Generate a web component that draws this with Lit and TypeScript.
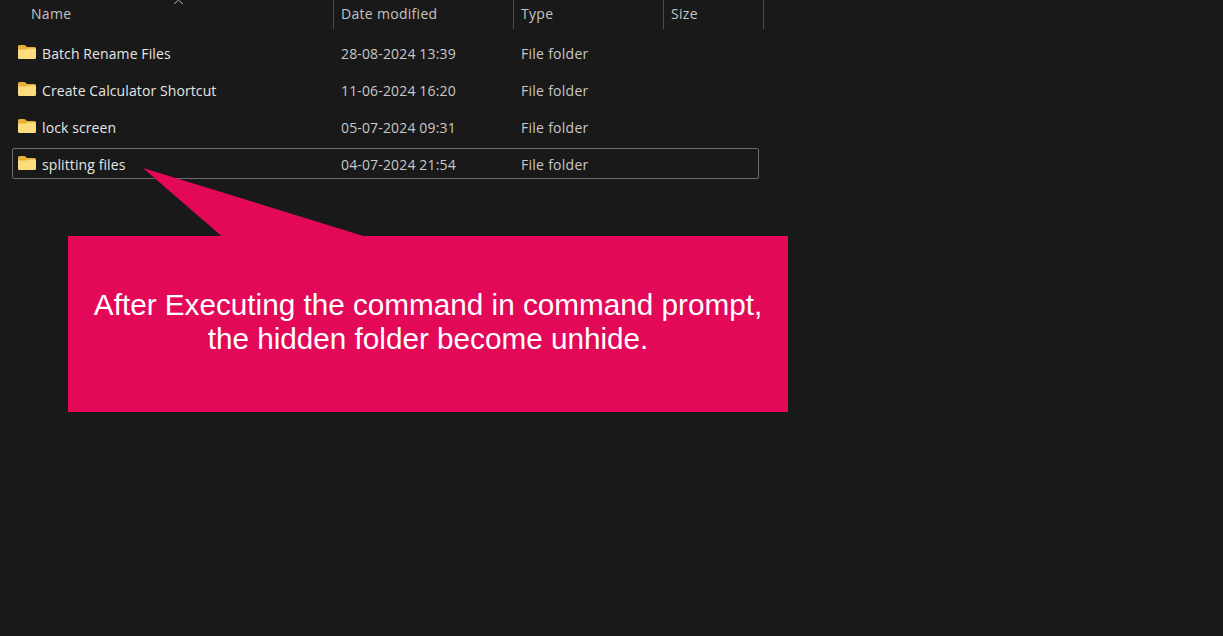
import { LitElement, html, css, svg } from "lit";
import { customElement } from "lit/decorators.js";

const rows = [
  ["Batch Rename Files", "28-08-2024 13:39"],
  ["Create Calculator Shortcut", "11-06-2024 16:20"],
  ["lock screen", "05-07-2024 09:31"],
  ["splitting files", "04-07-2024 21:54"],
];

const folder = svg`<svg class="ico" width="20" height="16" viewBox="0 0 20 16">
  <path d="M1 2.5 Q1 1 2.5 1 H7 Q8 1 9 2 L10 3 H17.5 Q19 3 19 4.5 V6 H1 Z" fill="#e8b038"/>
  <path d="M1 5.4 H9.5 L10.5 4.4 H17.6 Q19 4.4 19 5.8 V13.8 Q19 15 17.6 15 H2.4 Q1 15 1 13.8 Z" fill="#fddc7e"/>
</svg>`;

@customElement("app-root")
export class AppRoot extends LitElement {
  static styles = css`
    :host { display: block; width: 1223px; height: 636px; background: #191919; position: relative; overflow: hidden; font-family: "Open Sans", "Noto Sans", sans-serif; color: #dcdcdc; font-size: 14px; }
    .list { width: 764px; display: flex; flex-direction: column; }
    .head { display: grid; grid-template-columns: 334px 180px 150px 100px; height: 29px; }
    .hc { border-right: 1px solid #4a4a4a; padding: 4px 0 0 7px; color: #c4c4c4; line-height: 20px; letter-spacing: 0.3px; }
    .hc:first-child { padding-left: 31px; }
    .body { display: flex; flex-direction: column; padding-top: 8px; }
    .row { display: grid; grid-template-columns: 322px 180px 150px; width: 747px; height: 31px; margin: 0 0 6px 12px; box-sizing: border-box; border: 1px solid transparent; border-radius: 2px; align-items: center; line-height: 20px; padding-top: 2px; }
    .row.sel { border-color: #6b6b6b; }
    .name { display: flex; align-items: center; gap: 5px; padding-left: 4px; color: #e6e6e6; letter-spacing: 0.1px; }
    .ico { flex: none; margin-top: -3px; }
    .date { padding-left: 6px; color: #c8c8c8; letter-spacing: 0.15px; }
    .type { padding-left: 6px; color: #c8c8c8; letter-spacing: 0.27px; }
    .chev { position: absolute; left: 173px; top: -1px; }
    .callout { position: absolute; left: 68px; top: 236px; width: 720px; height: 176px; background: #e30958; display: flex; align-items: center; justify-content: center; text-align: center; color: #fff; font-family: "Liberation Sans", Arial, sans-serif; font-size: 29.7px; line-height: 34px; padding-bottom: 4px; box-sizing: border-box; white-space: nowrap; }
    .ptr { position: absolute; left: 0; top: 0; pointer-events: none; }
  `;

  render() {
    return html`
      <div class="list">
        <div class="head">
          <div class="hc">Name</div>
          <div class="hc">Date modified</div>
          <div class="hc">Type</div>
          <div class="hc">Size</div>
        </div>
        <div class="body">
          ${rows.map(
            ([n, d], i) => html`<div class="row ${i === 3 ? "sel" : ""}">
              <div class="name">${folder}<span>${n}</span></div>
              <div class="date">${d}</div>
              <div class="type">File folder</div>
            </div>`
          )}
        </div>
      </div>
      <svg class="chev" width="11" height="5" viewBox="0 0 11 5"><path d="M1 5 L5.5 1 L10 5" fill="none" stroke="#b0b0b0" stroke-width="1"/></svg>
      <svg class="ptr" width="400" height="240" viewBox="0 0 400 240"><polygon points="143,168 365,236.5 222,236.5" fill="#e30958"/></svg>
      <div class="callout"><div>After Executing the command in command prompt,<br />the hidden folder become unhide.</div></div>
    `;
  }
}
